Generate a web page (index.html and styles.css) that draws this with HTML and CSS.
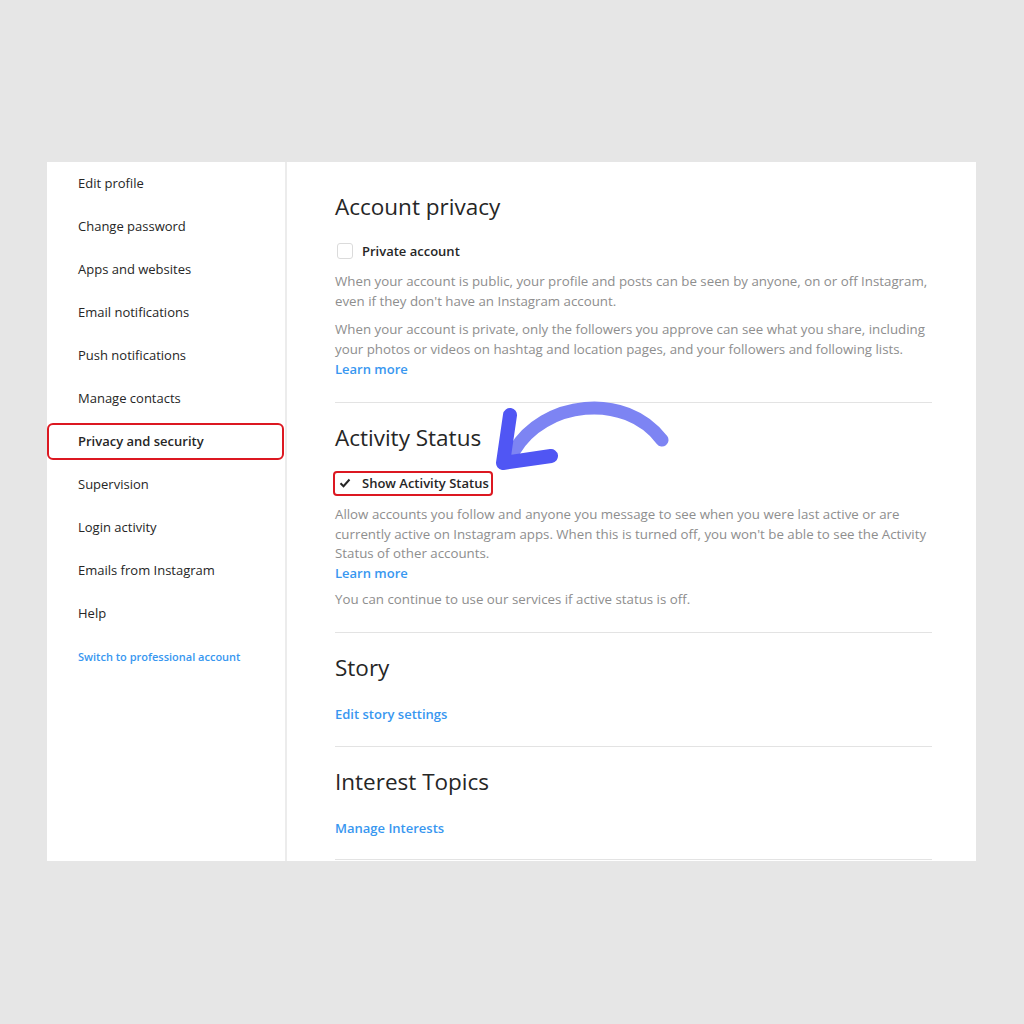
FILE: index.html
```html
<!DOCTYPE html>
<html lang="en">
<head>
    <meta charset="UTF-8">
    <title>Privacy and security</title>
    <link rel="stylesheet" href="styles.css">
</head>
<body>
    <div class="card">
        <ul class="side-nav">
            <li>Edit profile</li>
            <li>Change password</li>
            <li>Apps and websites</li>
            <li>Email notifications</li>
            <li>Push notifications</li>
            <li>Manage contacts</li>
            <li class="active">Privacy and security</li>
            <li>Supervision</li>
            <li>Login activity</li>
            <li>Emails from Instagram</li>
            <li>Help</li>
            <li class="switch">Switch to professional account</li>
        </ul>

        <main class="content">
            <section class="block">
                <h2>Account privacy</h2>
                <label class="check-row">
                    <span class="box"></span>
                    <span>Private account</span>
                </label>
                <p class="desc first">When your account is public, your profile and posts can be seen by anyone, on or off Instagram,<br>even if they don't have an Instagram account.</p>
                <p class="desc">When your account is private, only the followers you approve can see what you share, including<br>your photos or videos on hashtag and location pages, and your followers and following lists.<br><a class="link">Learn more</a></p>
            </section>

            <section class="block activity">
                <h2>Activity Status</h2>
                <label class="check-row marked">
                    <span class="box checked">
                        <svg width="12" height="10" viewBox="0 0 12 10"><path d="M1.5 5.2 L4.5 8.2 L10.5 1.5" fill="none" stroke="#262626" stroke-width="2"/></svg>
                    </span>
                    <span>Show Activity Status</span>
                </label>
                <p class="desc first tight">Allow accounts you follow and anyone you message to see when you were last active or are<br>currently active on Instagram apps. When this is turned off, you won't be able to see the Activity<br>Status of other accounts.<br><a class="link">Learn more</a></p>
                <p class="desc note">You can continue to use our services if active status is off.</p>

                <svg class="arrow" width="200" height="90" viewBox="480 395 200 90">
                    <path d="M514 450 C 543 400, 625 390, 662 439" fill="none" stroke="#7d84f3" stroke-width="13" stroke-linecap="round"/>
                    <path d="M510 414 L 503 462 L 551 455" fill="none" stroke="#5056f4" stroke-width="14" stroke-linecap="round" stroke-linejoin="round"/>
                </svg>
            </section>

            <section class="block story">
                <h2>Story</h2>
                <a class="link action">Edit story settings</a>
            </section>

            <section class="block topics">
                <h2>Interest Topics</h2>
                <a class="link action">Manage Interests</a>
            </section>
        </main>
    </div>
</body>
</html>
```

FILE: styles.css
```css
body {
    margin: 0;
    background: #e6e6e6;
    font-family: 'Open Sans', 'Noto Sans', sans-serif;
    color: #262626;
}
.card {
    display: flex;
    width: 929px;
    height: 699px;
    margin: 162px 0 0 47px;
    background: #fff;
    overflow: hidden;
}
.side-nav {
    list-style: none;
    margin: 0;
    padding: 0;
    width: 238px;
    flex-shrink: 0;
    border-right: 2px solid #ececec;
}
.side-nav li {
    position: relative;
    height: 43px;
    line-height: 43px;
    padding-left: 31px;
    font-size: 13px;
    color: #262626;
}
.side-nav li.active {
    font-weight: 600;
}
.side-nav li.active::after {
    content: '';
    position: absolute;
    top: 3px;
    bottom: 3px;
    left: 0;
    right: 1px;
    border: 2px solid #dc1821;
    border-radius: 6px;
}
.side-nav li.switch {
    font-size: 11px;
    font-weight: 600;
    color: #3897f0;
}
.content {
    flex: 1;
    padding: 0 44px 0 48px;
}
.block {
    position: relative;
    border-bottom: 1px solid #e3e3e3;
    padding: 30px 0 23px;
}
.block + .block {
    padding-top: 20px;
}
.block.story {
    padding-bottom: 22px;
}
.block.topics {
    padding-bottom: 21px;
}
.block h2 {
    margin: 0;
    font-size: 22.5px;
    font-weight: 400;
    line-height: 30px;
    color: #262626;
}
.check-row {
    display: flex;
    align-items: center;
    gap: 9px;
    margin: 19px 0 0 2px;
    height: 20px;
    font-size: 13px;
    font-weight: 600;
    width: max-content;
    position: relative;
}
.activity .check-row {
    margin-top: 20px;
}
.check-row.marked::after {
    content: '';
    position: absolute;
    left: -4px;
    right: -4px;
    top: -2px;
    bottom: -3px;
    border: 2px solid #dc1821;
    border-radius: 4px;
}
.box {
    width: 14px;
    height: 14px;
    border: 1px solid #dbdbdb;
    border-radius: 3px;
    display: flex;
    align-items: center;
    justify-content: center;
}
.box.checked {
    border-color: transparent;
}
.desc {
    margin: 8px 0 0;
    font-size: 13.3px;
    line-height: 20px;
    color: #8e8e8e;
}
.desc.first {
    margin-top: 10px;
}
.desc.tight {
    line-height: 19.5px;
    margin-top: 12px;
}
.desc.note {
    margin-top: 6px;
}
.link {
    color: #3897f0;
    font-weight: 600;
    font-size: 13px;
    cursor: pointer;
}
.action {
    display: block;
    margin-top: 21px;
    line-height: 20px;
}
.arrow {
    position: absolute;
    left: 145px;
    top: -7px;
}
```
